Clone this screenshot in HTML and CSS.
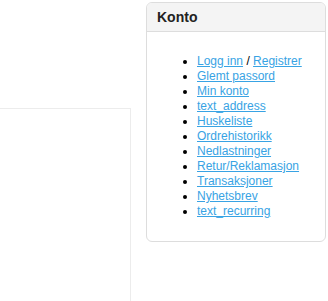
FILE: index.html
```html
<!DOCTYPE html>
<html lang="no">
<head>
  <meta charset="UTF-8" />
  <meta name="viewport" content="width=device-width, initial-scale=1.0" />
  <title>Konto</title>
  <link rel="stylesheet" href="styles.css">
</head>
<body>

<div id="page">
  <div id="mainCol">
    <div class="contentBox"></div>
  </div>

  <div id="sideCol">
    <div class="box">
      <div class="boxHead">Konto</div>
      <div class="boxBody">
        <ul>
          <li><a href="#">Logg inn</a> / <a href="#">Registrer</a></li>
          <li><a href="#">Glemt passord</a></li>
          <li><a href="#">Min konto</a></li>
          <li><a href="#">text_address</a></li>
          <li><a href="#">Huskeliste</a></li>
          <li><a href="#">Ordrehistorikk</a></li>
          <li><a href="#">Nedlastninger</a></li>
          <li><a href="#">Retur/Reklamasjon</a></li>
          <li><a href="#">Transaksjoner</a></li>
          <li><a href="#">Nyhetsbrev</a></li>
          <li><a href="#">text_recurring</a></li>
        </ul>
      </div>
    </div>
  </div>
</div>

</body>
</html>
```

FILE: styles.css
```css
body {
  margin: 0;
  font-family: "Liberation Sans", Arial, sans-serif;
  font-size: 12px;
  color: #000;
  background-color: #fff;
  overflow: hidden;
}
#page {
  display: flex;
  gap: 15px;
  height: 301px;
}
#mainCol {
  width: 131px;
  padding-top: 108px;
  box-sizing: border-box;
}
.contentBox {
  height: 193px;
  box-sizing: border-box;
  border-top: 1px solid #ececec;
  border-right: 1px solid #ececec;
}
#sideCol {
  width: 180px;
  padding-top: 2px;
}
.box {
  border: 1px solid #ddd;
  border-radius: 6px;
  overflow: hidden;
}
.boxHead {
  height: 28px;
  line-height: 28px;
  padding: 0 10px;
  background-color: #f4f4f4;
  border-bottom: 1px solid #ddd;
  font-size: 14px;
  font-weight: bold;
  color: #222;
}
.boxBody {
  padding: 10px;
}
.boxBody ul {
  margin: 12px 0;
  padding-left: 40px;
  line-height: 15px;
}
.boxBody a {
  color: #38a3e4;
}
```
